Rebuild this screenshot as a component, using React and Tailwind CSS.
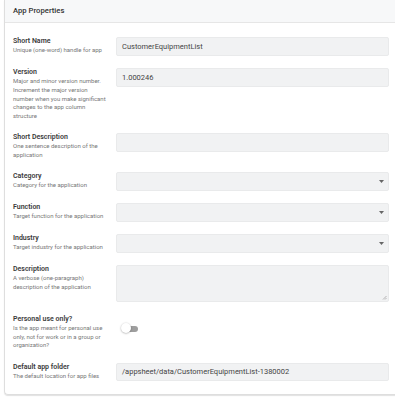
import React from 'react';

const rows = [
  { label: 'Short Name', desc: ['Unique (one-word) handle for app'], kind: 'input', value: 'CustomerEquipmentList' },
  {
    label: 'Version',
    desc: ['Major and minor version number.', 'Increment the major version', 'number when you make significant', 'changes to the app column', 'structure'],
    kind: 'input',
    value: '1.000246',
  },
  { label: 'Short Description', desc: ['One sentence description of the', 'application'], kind: 'input', value: '' },
  { label: 'Category', desc: ['Category for the application'], kind: 'select' },
  { label: 'Function', desc: ['Target function for the application'], kind: 'select' },
  { label: 'Industry', desc: ['Target industry for the application'], kind: 'select' },
  { label: 'Description', desc: ['A verbose (one-paragraph)', 'description of the application'], kind: 'textarea' },
  {
    label: 'Personal use only?',
    desc: ['Is the app meant for personal use', 'only, not for work or in a group or', 'organization?'],
    kind: 'toggle',
  },
  { label: 'Default app folder', desc: ['The default location for app files'], kind: 'input', value: '/appsheet/data/CustomerEquipmentList-1380002' },
];

function Field({ row }) {
  if (row.kind === 'toggle') {
    return (
      <div className="h-[18px] flex items-center">
        <div className="relative w-[18px] h-[9px] ml-[5px] mt-[10px]">
          <div className="absolute left-[3px] top-[1.5px] w-[14px] h-[6px] rounded-full bg-[#9e9e9e]" />
          <div className="absolute left-0 top-[-1px] w-[10px] h-[10px] rounded-full bg-white shadow-[0_0.5px_2px_rgba(0,0,0,0.35)]" />
        </div>
      </div>
    );
  }
  if (row.kind === 'textarea') {
    return (
      <div className="relative h-[37px] rounded-[2px] bg-[#f1f2f3] border border-[#e9eaeb]">
        <svg className="absolute right-[1px] bottom-[1px]" width="5" height="5" viewBox="0 0 5 5">
          <path d="M4.5 1 L1 4.5 M4.5 3 L3 4.5" stroke="#9a9a9a" strokeWidth="0.7" />
        </svg>
      </div>
    );
  }
  return (
    <div className="relative h-[18.5px] rounded-[2px] bg-[#f1f2f3] border border-[#e9eaeb] flex items-center px-[5px] text-[7.5px] text-[#444]">
      {row.value}
      {row.kind === 'select' && (
        <svg className="absolute right-[4px] top-[7px]" width="5" height="3" viewBox="0 0 5 3">
          <path d="M0 0 H5 L2.5 3 Z" fill="#666" />
        </svg>
      )}
    </div>
  );
}

export default function App() {
  return (
    <div className="w-[395px] h-[400px] overflow-hidden bg-white font-['Roboto',sans-serif]">
      <div className="ml-1 w-[395px] border-l border-b border-[#dedede] rounded-bl-[4px] shadow-[0_1px_1px_rgba(0,0,0,0.12)]">
        <div className="h-[23px] bg-[#f7f8f9] border-b border-[#e6e6e6] flex items-center pl-2 text-[7.7px] text-[#333] font-medium">
          App Properties
        </div>
        <div className="pl-2 pt-[14px] pb-[13px] flex flex-col gap-[12.5px]">
          {rows.map((row, i) => (
            <div key={i} className="flex items-start">
              <div className="w-[103px] shrink-0">
                <div className="text-[7px] leading-[9px] font-semibold text-[#3a3a3a]">{row.label}</div>
                <div className="text-[6px] leading-[8.75px] text-[#777]">
                  {row.desc.map((d, j) => (
                    <div key={j} className="whitespace-nowrap">{d}</div>
                  ))}
                </div>
              </div>
              <div className="w-[273px]">
                <Field row={row} />
              </div>
            </div>
          ))}
        </div>
      </div>
    </div>
  );
}
